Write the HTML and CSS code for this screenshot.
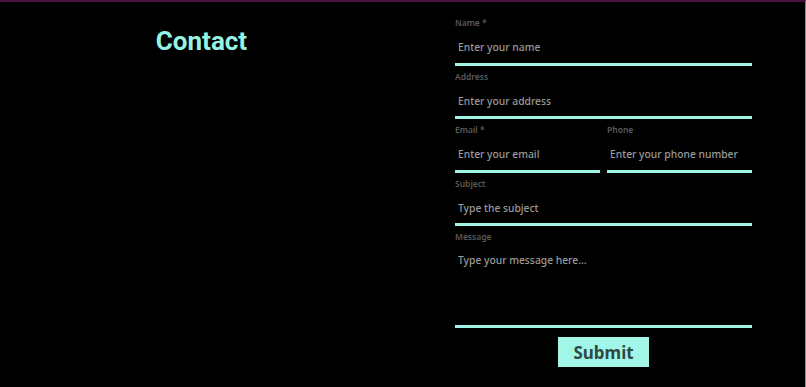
FILE: index.html
```html
<!DOCTYPE html>
<html>
<head>
<meta charset="utf-8">
<link rel="stylesheet" href="styles.css">
</head>
<body>
<div class="page">
  <div class="left">
    <h1 class="title">Contact</h1>
  </div>
  <div class="right">
    <form class="form">
      <div class="field">
        <label class="label">Name *</label>
        <input class="input" type="text" placeholder="Enter your name">
      </div>
      <div class="field">
        <label class="label">Address</label>
        <input class="input" type="text" placeholder="Enter your address">
      </div>
      <div class="row">
        <div class="field">
          <label class="label">Email *</label>
          <input class="input" type="text" placeholder="Enter your email">
        </div>
        <div class="field">
          <label class="label">Phone</label>
          <input class="input" type="text" placeholder="Enter your phone number">
        </div>
      </div>
      <div class="field">
        <label class="label">Subject</label>
        <input class="input" type="text" placeholder="Type the subject">
      </div>
      <div class="field">
        <label class="label">Message</label>
        <textarea class="input textarea" placeholder="Type your message here..."></textarea>
      </div>
      <div class="actions">
        <button class="submit" type="button">Submit</button>
      </div>
    </form>
  </div>
</div>
</body>
</html>
```
FILE: styles.css
```css
html, body {
  margin: 0;
  padding: 0;
  background: #000;
}
.page {
  box-sizing: border-box;
  width: 806px;
  height: 387px;
  border-top: 2px solid #4a1244;
  border-right: 1px solid #8a8a8a;
  display: grid;
  grid-template-columns: 403px 1fr;
  background: #000;
}
.left {
  display: flex;
  justify-content: center;
  padding-top: 24px;
}
.title {
  margin: 0;
  font-family: Roboto, "Liberation Sans", sans-serif;
  font-weight: 700;
  font-size: 26px;
  line-height: 30px;
  color: #95f3e3;
}
.right {
  padding-left: 52px;
}
.form {
  width: 297px;
  padding-top: 15px;
  display: flex;
  flex-direction: column;
  font-family: "Noto Sans", "DejaVu Sans", sans-serif;
}
.field {
  display: flex;
  flex-direction: column;
  margin-bottom: 5px;
}
.row {
  display: grid;
  grid-template-columns: 145px 145px;
  column-gap: 7px;
}
.label {
  font-size: 8.5px;
  font-weight: 600;
  line-height: 12px;
  color: #5a5a5a;
}
.input {
  box-sizing: border-box;
  height: 36.5px;
  margin: 0;
  padding: 3px 0 0 3px;
  background: transparent;
  border: none;
  border-bottom: 3px solid #9cf5e5;
  font-family: "Noto Sans", "DejaVu Sans", sans-serif;
  font-size: 10.3px;
  font-weight: 500;
  color: #ddd;
  outline: none;
}
.input::placeholder {
  color: #9a9a9a;
}
.textarea {
  height: 85px;
  padding-top: 10px;
  resize: none;
}
.actions {
  display: flex;
  justify-content: center;
  padding-top: 4px;
}
.submit {
  width: 91px;
  height: 30px;
  border: none;
  background: #a0f6e7;
  color: #2e4946;
  font-family: "Noto Sans", "DejaVu Sans", sans-serif;
  font-weight: 700;
  font-size: 17px;
  padding: 0;
}
```
